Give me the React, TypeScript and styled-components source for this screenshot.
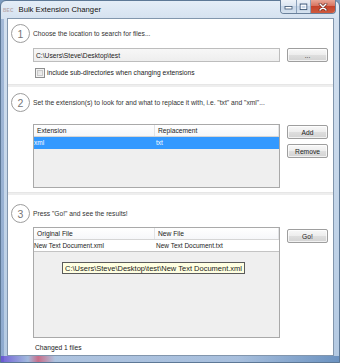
import React from 'react';
import styled, {createGlobalStyle} from 'styled-components';

const GlobalStyle = createGlobalStyle`
    *, *::before, *::after {
        box-sizing: border-box;
    }
    html, body {
        margin: 0;
        padding: 0;
    }
    body {
        width: 340px;
        height: 363px;
        overflow: hidden;
        background: #7d9cc0;
        font-family: "Liberation Sans", Arial, sans-serif;
    }
`;

const STEPS = {
    location: 'Choose the location to search for files...',
    extensions: 'Set the extension(s) to look for and what to replace it with, i.e. "txt" and "xml"...',
    results: 'Press "Go!" and see the results!',
};

export default function App() {
    return (
        <>
            <GlobalStyle/>
            <Window>
                <TitleBar>
                    <AppIcon>BEC</AppIcon>
                    <Title>Bulk Extension Changer</Title>
                    <CaptionGroup>
                        <CaptionButton $width={16}>
                            <svg width="9" height="6" viewBox="0 0 9 6">
                                <rect x="1" y="2.5" width="7" height="2.5" fill="#fff" stroke="#3d5573" strokeWidth="0.8"/>
                            </svg>
                        </CaptionButton>
                        <CaptionButton $width={14}>
                            <svg width="9" height="8" viewBox="0 0 9 8">
                                <rect x="1.2" y="1" width="6.6" height="5.6" fill="none" stroke="#3d5573" strokeWidth="0.9"/>
                                <rect x="2.2" y="2.4" width="4.6" height="3.2" fill="none" stroke="#fff" strokeWidth="0.8"/>
                            </svg>
                        </CaptionButton>
                        <CloseButton>
                            <svg width="10" height="8" viewBox="0 0 10 8">
                                <path d="M2 1 L8 7 M8 1 L2 7" stroke="#5a1b12" strokeWidth="2.6" strokeLinecap="round"/>
                                <path d="M2 1 L8 7 M8 1 L2 7" stroke="#fff" strokeWidth="1.5" strokeLinecap="round"/>
                            </svg>
                        </CloseButton>
                    </CaptionGroup>
                </TitleBar>

                <Client>
                    <Section $top={5} $bottom={6}>
                        <StepHeader>
                            <StepCircle>1</StepCircle>
                            <StepCaption>{STEPS.location}</StepCaption>
                        </StepHeader>
                        <StepBody>
                            <PathRow>
                                <TextBox>C:\Users\Steve\Desktop\test</TextBox>
                                <Button>...</Button>
                            </PathRow>
                            <CheckRow>
                                <CheckBox/>
                                <Label>include sub-directories when changing extensions</Label>
                            </CheckRow>
                        </StepBody>
                    </Section>

                    <Divider/>

                    <Section $top={6} $bottom={4}>
                        <StepHeader>
                            <StepCircle>2</StepCircle>
                            <StepCaption>{STEPS.extensions}</StepCaption>
                        </StepHeader>
                        <StepBody>
                            <ListArea $top={12}>
                                <ListView $height={64}>
                                    <ListHeader>
                                        <HeaderCell>Extension</HeaderCell>
                                        <HeaderCell>Replacement</HeaderCell>
                                    </ListHeader>
                                    <ListRow $selected>
                                        <Cell>xml</Cell>
                                        <Cell $second>txt</Cell>
                                    </ListRow>
                                </ListView>
                                <ButtonColumn $top={1}>
                                    <Button>Add</Button>
                                    <Button>Remove</Button>
                                </ButtonColumn>
                            </ListArea>
                        </StepBody>
                    </Section>

                    <Divider/>

                    <Section $top={9} $bottom={2}>
                        <StepHeader>
                            <StepCircle>3</StepCircle>
                            <StepCaption>{STEPS.results}</StepCaption>
                        </StepHeader>
                        <StepBody>
                            <ListArea $top={4}>
                                <ListView $height={111}>
                                    <ListHeader>
                                        <HeaderCell>Original File</HeaderCell>
                                        <HeaderCell>New File</HeaderCell>
                                    </ListHeader>
                                    <ListRow>
                                        <Cell>New Text Document.xml</Cell>
                                        <Cell $second>New Text Document.txt</Cell>
                                    </ListRow>
                                    <Tooltip>C:\Users\Steve\Desktop\test\New Text Document.xml</Tooltip>
                                </ListView>
                                <ButtonColumn $top={2}>
                                    <Button>Go!</Button>
                                </ButtonColumn>
                            </ListArea>
                            <Status>Changed 1 files</Status>
                        </StepBody>
                    </Section>
                </Client>
            </Window>
        </>
    );
}

const Window = styled.div`
    display: flex;
    flex-direction: column;
    width: 340px;
    height: 363px;
    border: 1px solid #5d7896;
    border-radius: 6px 6px 0 0;
    background:
        linear-gradient(90deg, rgba(92, 60, 210, 0.75) 0%, rgba(120, 150, 210, 0.3) 8%, rgba(210, 70, 100, 0.7) 11%, rgba(150, 170, 210, 0.2) 16%, rgba(120, 150, 200, 0.2) 70%, rgba(60, 110, 170, 0.6) 100%) bottom / 100% 6px no-repeat,
        linear-gradient(90deg, rgba(70, 110, 170, 0.35) 0, rgba(70, 110, 170, 0.35) 3px, transparent 3px) left bottom / 6px calc(100% - 18px) no-repeat,
        linear-gradient(180deg, #e4edf7 0%, #d3e0ef 20px, #c2d4e8 60%, #b3c9e2 100%);
`;

const TitleBar = styled.div`
    display: flex;
    align-items: flex-start;
    height: 18px;
    padding-left: 2px;
`;

const AppIcon = styled.span`
    margin-top: 7px;
    font-size: 4.7px;
    font-weight: bold;
    letter-spacing: 0.2px;
    color: #b7a9ad;
`;

const Title = styled.span`
    margin: 4px 0 0 5px;
    font-size: 7.7px;
    color: #111;
    text-shadow: 0 0 5px rgba(255, 255, 255, 0.95);
`;

const CaptionGroup = styled.div`
    display: flex;
    margin-left: auto;
    margin-right: 3px;
    height: 14px;
    margin-top: -1px;
    border: 1px solid #6a819c;
    border-top: none;
    border-radius: 0 0 4px 4px;
    overflow: hidden;
`;

const CaptionButton = styled.div<{$width: number}>`
    display: flex;
    align-items: center;
    justify-content: center;
    width: ${p => p.$width}px;
    height: 100%;
    border-right: 1px solid #8aa0ba;
    background: linear-gradient(180deg, #edf2f8 0%, #dbe5f1 45%, #c6d5e7 50%, #d6e2ef 100%);
`;

const CloseButton = styled.div`
    display: flex;
    align-items: center;
    justify-content: center;
    width: 24px;
    height: 100%;
    background: linear-gradient(180deg, #e8a797 0%, #d8735f 45%, #c4432b 50%, #cf5a3e 100%);
`;

const Client = styled.div`
    flex: 1;
    display: flex;
    flex-direction: column;
    margin: 0 5px 6px 6px;
    border: 1px solid #8296ad;
    background: #fff;
`;

const Section = styled.section<{$top: number; $bottom: number}>`
    display: flex;
    flex-direction: column;
    padding: ${p => p.$top}px 0 ${p => p.$bottom}px 3px;
`;

const Divider = styled.div`
    height: 3px;
    background: #eeeeee;
    border-top: 1px solid #e6e6e6;
`;

const StepHeader = styled.div`
    display: flex;
    align-items: center;
    gap: 3px;
`;

const StepCircle = styled.div`
    display: flex;
    align-items: center;
    justify-content: center;
    flex-shrink: 0;
    width: 19px;
    height: 19px;
    border: 1px solid #9d9d9d;
    border-radius: 50%;
    font-size: 10.5px;
    color: #777;
`;

const StepCaption = styled.span`
    font-size: 6.7px;
    color: #333;
    white-space: nowrap;
`;

const StepBody = styled.div`
    display: flex;
    flex-direction: column;
    margin-left: 22px;
`;

const PathRow = styled.div`
    display: flex;
    gap: 7px;
    margin-top: 5px;
`;

const TextBox = styled.div`
    display: flex;
    align-items: center;
    width: 247px;
    height: 14px;
    padding-left: 2px;
    border: 1px solid #bdbdbd;
    background: linear-gradient(180deg, #f7f7f7, #eeeeee);
    font-size: 6.7px;
    color: #222;
`;

const Button = styled.button`
    width: 41px;
    height: 14px;
    padding: 0;
    border: 1px solid #9e9e9e;
    border-radius: 2px;
    background: linear-gradient(180deg, #f8f8f8 0%, #ededed 48%, #dedede 52%, #d3d3d3 100%);
    box-shadow: inset 0 0 0 1px rgba(255, 255, 255, 0.7);
    font-family: "Liberation Sans", Arial, sans-serif;
    font-size: 6.7px;
    color: #222;
`;

const CheckRow = styled.div`
    display: flex;
    align-items: center;
    gap: 2px;
    height: 11px;
    margin-top: 5px;
    padding-left: 2px;
`;

const CheckBox = styled.span`
    width: 10px;
    height: 10px;
    border: 1px solid #8e8f8f;
    background: linear-gradient(135deg, #dcdcdc, #f7f7f7);
    box-shadow: inset 0 0 0 1px #f2f2f2, inset 0 0 0 2px #c9c9c9;
`;

const Label = styled.span`
    font-size: 6.7px;
    color: #222;
`;

const ListArea = styled.div<{$top: number}>`
    display: flex;
    align-items: flex-start;
    gap: 7px;
    margin-top: ${p => p.$top}px;
`;

const ListView = styled.div<{$height: number}>`
    position: relative;
    width: 247px;
    height: ${p => p.$height}px;
    border: 1px solid #a9a9a9;
    background: #efefef;
`;

const ListHeader = styled.div`
    display: grid;
    grid-template-columns: 121px 1fr;
    height: 12px;
    background: linear-gradient(180deg, #ffffff, #f6f7f9);
    border-bottom: 1px solid #d5d5d5;
`;

const HeaderCell = styled.div`
    display: flex;
    align-items: center;
    padding-left: 3px;
    border-right: 1px solid #e2e3e5;
    font-size: 6.7px;
    color: #222;
`;

const ListRow = styled.div<{$selected?: boolean}>`
    display: grid;
    grid-template-columns: 121px 1fr;
    height: 12px;
    background: ${p => (p.$selected ? '#3399ff' : '#ffffff')};
    border-bottom: 1px solid ${p => (p.$selected ? '#3399ff' : '#c4c4c4')};
    color: ${p => (p.$selected ? '#ffffff' : '#222')};
`;

const Cell = styled.div<{$second?: boolean}>`
    display: flex;
    align-items: center;
    padding-left: ${p => (p.$second ? 1 : 0)}px;
    font-size: 6.5px;
    white-space: nowrap;
    overflow: hidden;
`;

const ButtonColumn = styled.div<{$top: number}>`
    display: flex;
    flex-direction: column;
    gap: 5px;
    padding-top: ${p => p.$top}px;
`;

const Tooltip = styled.div`
    position: absolute;
    top: 34px;
    left: 28px;
    height: 12px;
    padding: 0 2px;
    display: flex;
    align-items: center;
    border: 1px solid #5b5b5b;
    background: #ffffe1;
    font-size: 7.5px;
    color: #222;
    white-space: nowrap;
`;

const Status = styled.div`
    height: 12px;
    margin-top: 3px;
    padding-left: 2px;
    display: flex;
    align-items: center;
    font-size: 6.7px;
    color: #222;
`;
